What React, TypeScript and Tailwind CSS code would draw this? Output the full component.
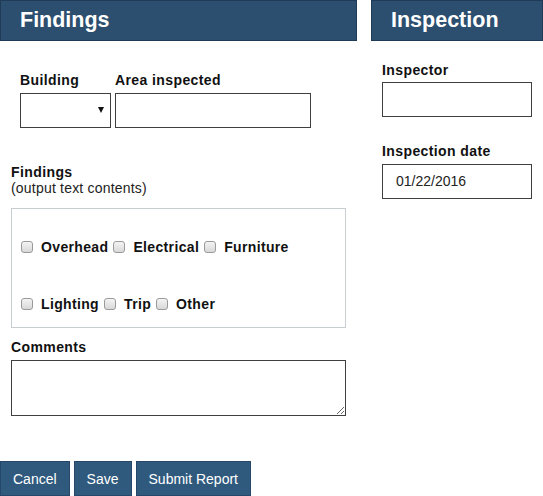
import React from "react";

const font = { fontFamily: '"Liberation Sans", Arial, sans-serif' };

function Header({ title }: { title: string }) {
  return (
    <div className="h-[41px] bg-[#2c4f70] border border-[#1f3b57] pl-[19px] flex items-center">
      <span className="text-white font-bold text-[21.5px] leading-none">{title}</span>
    </div>
  );
}

function Label({ children, className = "" }: { children: React.ReactNode; className?: string }) {
  return (
    <div className={"text-[14px] leading-[16px] font-bold tracking-[0.4px] text-[#111] " + className}>
      {children}
    </div>
  );
}

function Check({ label }: { label: string }) {
  return (
    <div className="flex items-center">
      <span className="block w-[12px] h-[12px] rounded-[3px] border border-[#9a9a9a] bg-gradient-to-b from-[#f4f4f4] to-[#d8d8d8] mr-[8px]" />
      <span className="text-[14px] leading-[16px] font-bold tracking-[0.35px] text-[#111] mr-[5px]">{label}</span>
    </div>
  );
}

export default function App() {
  return (
    <div style={font} className="w-[543px] h-[496px] overflow-hidden bg-white flex gap-[14px]">
      <div className="w-[357px] shrink-0 flex flex-col">
        <Header title="Findings" />
        <div className="mt-[31px] pl-[20px] flex gap-[4px]">
          <div className="flex flex-col">
            <Label>Building</Label>
            <div className="mt-[5px] w-[91px] h-[35px] border border-[#3f3f3f] relative">
              <span className="absolute right-[6px] top-[13px] w-0 h-0 border-l-[3.5px] border-r-[3.5px] border-t-[6px] border-l-transparent border-r-transparent border-t-[#111]" />
            </div>
          </div>
          <div className="flex flex-col">
            <Label>Area inspected</Label>
            <input className="mt-[5px] w-[196px] h-[35px] border border-[#3f3f3f] outline-none" />
          </div>
        </div>
        <div className="pl-[11px] mt-[36px]">
          <Label>Findings</Label>
          <div className="text-[14px] leading-[16px] tracking-[0.2px] text-[#222]">(output text contents)</div>
          <div className="mt-[12px] w-[335px] h-[120px] border border-[#c8cdd0] pl-[9px] pt-[30px]">
            <div className="flex items-center h-[16px]">
              <Check label="Overhead" />
              <Check label="Electrical" />
              <Check label="Furniture" />
            </div>
            <div className="flex items-center h-[16px] mt-[41px]">
              <Check label="Lighting" />
              <Check label="Trip" />
              <Check label="Other" />
            </div>
          </div>
          <Label className="mt-[11px]">Comments</Label>
          <textarea className="block mt-[5px] w-[335px] h-[56px] border border-[#3f3f3f] outline-none" />
        </div>
        <div className="mt-[45px] flex gap-[4px]">
          {["Cancel", "Save", "Submit Report"].map((b) => (
            <button
              key={b}
              className="h-[35px] px-[12px] bg-[#2f5a7d] border border-[#24476a] text-white text-[14px] leading-none"
            >
              {b}
            </button>
          ))}
        </div>
      </div>
      <div className="flex-1 flex flex-col">
        <Header title="Inspection" />
        <div className="pl-[11px]">
          <Label className="mt-[21px]">Inspector</Label>
          <input className="mt-[4px] w-[150px] h-[35px] border border-[#3f3f3f] outline-none" />
          <Label className="mt-[26px]">Inspection date</Label>
          <div className="mt-[5px] w-[150px] h-[35px] border border-[#3f3f3f] pl-[13px] flex items-center text-[14px] text-[#222]">
            01/22/2016
          </div>
        </div>
      </div>
    </div>
  );
}
